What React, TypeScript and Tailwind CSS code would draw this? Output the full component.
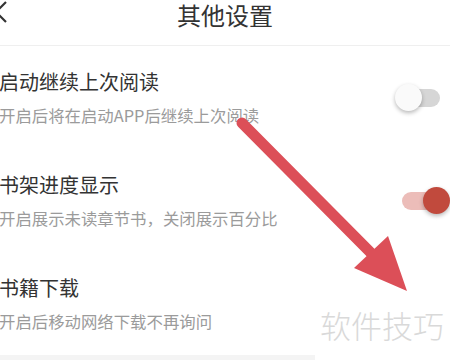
import React, { useState } from 'react';

type Row = { title: string; desc: string; on: boolean | null };

const rows: Row[] = [
  { title: '启动继续上次阅读', desc: '开启后将在启动APP后继续上次阅读', on: false },
  { title: '书架进度显示', desc: '开启展示未读章节书，关闭展示百分比', on: true },
  { title: '书籍下载', desc: '开启后移动网络下载不再询问', on: null },
];

const Toggle: React.FC<{ on: boolean; onClick: () => void }> = ({ on, onClick }) => (
  <button onClick={onClick} className="relative w-[55px] h-[28px] shrink-0">
    <span
      className={`absolute left-[7px] top-[5px] w-[38px] h-[18px] rounded-full ${
        on ? 'bg-[#ecbdb9]' : 'bg-[#d6d6d6]'
      }`}
    />
    <span
      className={`absolute top-0 w-[27px] h-[27px] rounded-full shadow-[0_2px_4px_rgba(0,0,0,0.28)] ${
        on ? 'left-[28px] bg-[#c14a3d]' : 'left-0 bg-[#fafafa]'
      }`}
    />
  </button>
);

export default function App() {
  const [state, setState] = useState(rows.map((r) => r.on));

  return (
    <div className="relative w-[450px] h-[360px] overflow-hidden bg-white font-['Noto_Sans_CJK_SC','Noto_Sans',sans-serif]">
      <div className="grid grid-cols-[1fr_auto_1fr] items-start h-[46px] pt-[1px] border-b border-[#efefef]">
        <svg className="ml-[-9px]" width="18" height="22" viewBox="0 0 18 22">
          <path d="M15 1 L5 11 L15 21" fill="none" stroke="#333" strokeWidth="2.2" />
        </svg>
        <div className="text-[24px] leading-[28px] text-[#333]">其他设置</div>
        <div />
      </div>

      <div className="flex flex-col ml-[-1px]">
        {rows.map((row, i) => (
          <div key={row.title} className="h-[103px] pt-[22px] flex items-start justify-between">
            <div className="flex flex-col gap-[8px]">
              <div className="text-[20px] leading-[28px] text-[#333]">{row.title}</div>
              <div className="text-[16.4px] leading-[22px] text-[#9b9b9b]">{row.desc}</div>
            </div>
            {state[i] !== null && (
              <div className="self-start mt-[16px]">
                <Toggle
                  on={!!state[i]}
                  onClick={() => setState((s) => s.map((v, j) => (j === i ? !v : v)))}
                />
              </div>
            )}
          </div>
        ))}
      </div>

      <div className="w-[315px] h-[6px] bg-[#f4f4f4]" />

      {/* watermark */}
      <div className="absolute left-[320px] top-[305px] text-[31px] leading-[40px] font-light text-[#d9d9d9]">
        软件技巧
      </div>

      {/* annotation arrow */}
      <svg className="absolute inset-0 pointer-events-none" width="450" height="360">
        <line x1="242" y1="123" x2="374" y2="256" stroke="#dc4f58" strokeWidth="11" strokeLinecap="round" />
        <polygon points="354,268 388,236 407,291" fill="#dc4f58" />
      </svg>
    </div>
  );
}
